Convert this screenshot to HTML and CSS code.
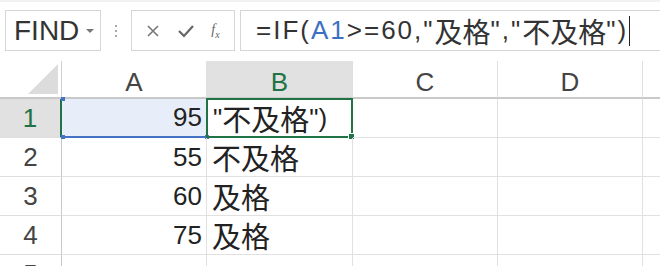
FILE: index.html
```html
<!DOCTYPE html>
<html lang="zh-CN">
<head>
  <meta charset="UTF-8" />
  <title>IF formula</title>
  <link rel="stylesheet" href="styles.css">
</head>
<body>
  <div class="toolbar">
    <div class="namebox">
      <span class="name">FIND</span>
      <span class="caret"></span>
    </div>
    <div class="dots"><i></i><i></i><i></i></div>
    <div class="fnbox">
      <svg width="14" height="14" viewBox="0 0 14 14"><path d="M2 2 L12 12 M12 2 L2 12" stroke="#777" stroke-width="1.6" fill="none"/></svg>
      <svg width="18" height="14" viewBox="0 0 18 14"><path d="M2 7 L7 12 L16 2" stroke="#666" stroke-width="2.2" fill="none"/></svg>
      <span class="fx">f<sub>x</sub></span>
    </div>
    <div class="formula">=IF(<span class="ref">A1</span>&gt;=60,"<span class="zh">及格</span>","<span class="zh">不及格</span>")<span class="cursor"></span></div>
  </div>

  <div class="sheet">
    <div class="hd corner"><span class="tri"></span></div>
    <div class="hd col">A</div>
    <div class="hd col sel">B</div>
    <div class="hd col">C</div>
    <div class="hd col">D</div>
    <div class="hd col last"></div>

    <div class="hd row sel">1</div>
    <div class="cell num ref-cell">95<i class="h tl"></i><i class="h bl"></i><i class="h br"></i></div>
    <div class="cell active">"<span class="zh">不及格</span>")<i class="fill"></i></div>
    <div class="cell"></div>
    <div class="cell"></div>
    <div class="cell last"></div>

    <div class="hd row">2</div>
    <div class="cell num">55</div>
    <div class="cell"><span class="zh">不及格</span></div>
    <div class="cell"></div>
    <div class="cell"></div>
    <div class="cell last"></div>

    <div class="hd row">3</div>
    <div class="cell num">60</div>
    <div class="cell"><span class="zh">及格</span></div>
    <div class="cell"></div>
    <div class="cell"></div>
    <div class="cell last"></div>

    <div class="hd row">4</div>
    <div class="cell num">75</div>
    <div class="cell"><span class="zh">及格</span></div>
    <div class="cell"></div>
    <div class="cell"></div>
    <div class="cell last"></div>

    <div class="hd row">5</div>
    <div class="cell"></div>
    <div class="cell"></div>
    <div class="cell"></div>
    <div class="cell"></div>
    <div class="cell last"></div>
  </div>
</body>
</html>
```

FILE: styles.css
```css
body {
  margin: 0;
  width: 660px;
  height: 266px;
  overflow: hidden;
  background: #fff;
  font-family: "Liberation Sans", "Noto Sans CJK SC", sans-serif;
  color: #222;
}
.toolbar {
  height: 61px;
  box-sizing: border-box;
  padding: 8px 0 10px 5px;
  display: flex;
  align-items: stretch;
  border-top: 2px solid #f2f2f2;
}
.namebox {
  width: 96px;
  box-sizing: border-box;
  border: 1px solid #d6d6d6;
  display: flex;
  align-items: center;
  padding-left: 8px;
}
.name {
  font-size: 28px;
  color: #333;
  flex: 1;
}
.caret {
  width: 0;
  height: 0;
  border-left: 4px solid transparent;
  border-right: 4px solid transparent;
  border-top: 4px solid #777;
  margin-right: 6px;
}
.dots {
  width: 30px;
  display: flex;
  flex-direction: column;
  align-items: center;
  justify-content: center;
  gap: 3px;
}
.dots i {
  width: 2px;
  height: 2px;
  background: #aaa;
}
.fnbox {
  width: 104px;
  box-sizing: border-box;
  border: 1px solid #d6d6d6;
  display: flex;
  align-items: center;
  justify-content: space-around;
  padding: 0 6px;
}
.fx {
  font-family: "Liberation Serif", serif;
  font-style: italic;
  font-size: 14px;
  color: #666;
}
.fx sub {
  font-size: 10px;
}
.formula {
  flex: 1;
  margin-left: 5px;
  border: 1px solid #d6d6d6;
  border-right: none;
  display: flex;
  align-items: center;
  padding-left: 15px;
  font-size: 26px;
  letter-spacing: 2px;
  color: #333;
  white-space: nowrap;
}
.formula .ref {
  color: #3e70c2;
}
.formula .zh {
  font-size: 28px;
  letter-spacing: 0;
}
.cursor {
  width: 1px;
  height: 30px;
  background: #222;
  margin-left: 1px;
}
.sheet {
  display: grid;
  grid-template-columns: 62px 145px 146px 145px 145px 1fr;
  grid-template-rows: 38px repeat(5, 39px);
  font-size: 26px;
}
.hd {
  box-sizing: border-box;
  color: #444;
  display: flex;
  align-items: center;
  justify-content: center;
  border-bottom: 1px solid #d0d0d0;
  border-right: 1px solid #e0e0e0;
}
.hd.col {
  padding-top: 6px;
  border-bottom: 2px solid #c9c9c9;
}
.hd.corner {
  border-right: 1px solid #d0d0d0;
  border-bottom: 2px solid #c9c9c9;
  position: relative;
}
.tri {
  position: absolute;
  right: 3px;
  bottom: 3px;
  width: 0;
  height: 0;
  border-left: 30px solid transparent;
  border-bottom: 30px solid #dcdcdc;
}
.hd.row {
  border-right: 1px solid #c9c9c9;
  border-bottom: 1px solid #dedede;
}
.hd.sel {
  background: #e1e1e1;
  color: #217346;
}
.hd.row.sel {
  border-right: 2px solid #217346;
}
.hd.last {
  border-right: none;
}
.cell {
  box-sizing: border-box;
  border-right: 1px solid #e1e1e1;
  border-bottom: 1px solid #e1e1e1;
  display: flex;
  align-items: center;
  padding: 0 5px;
  white-space: nowrap;
  position: relative;
}
.cell .zh {
  font-size: 29px;
}
.cell.last {
  border-right: none;
}
.cell.num {
  justify-content: flex-end;
  padding-right: 4px;
}
.ref-cell {
  background: #e8eef9;
  border-bottom: 2px solid #4472c4;
}
.h {
  position: absolute;
  width: 4px;
  height: 4px;
  background: #4472c4;
}
.h.tl { left: -1px; top: -2px; }
.h.bl { left: -1px; bottom: -3px; }
.h.br { right: -3px; bottom: -3px; }
.active {
  border: 2px solid #217346;
  margin: -1px 0 0 -1px;
  padding-left: 5px;
}
.fill {
  position: absolute;
  right: -4px;
  bottom: -4px;
  width: 5px;
  height: 5px;
  background: #217346;
  border: 1px solid #fff;
}
```
